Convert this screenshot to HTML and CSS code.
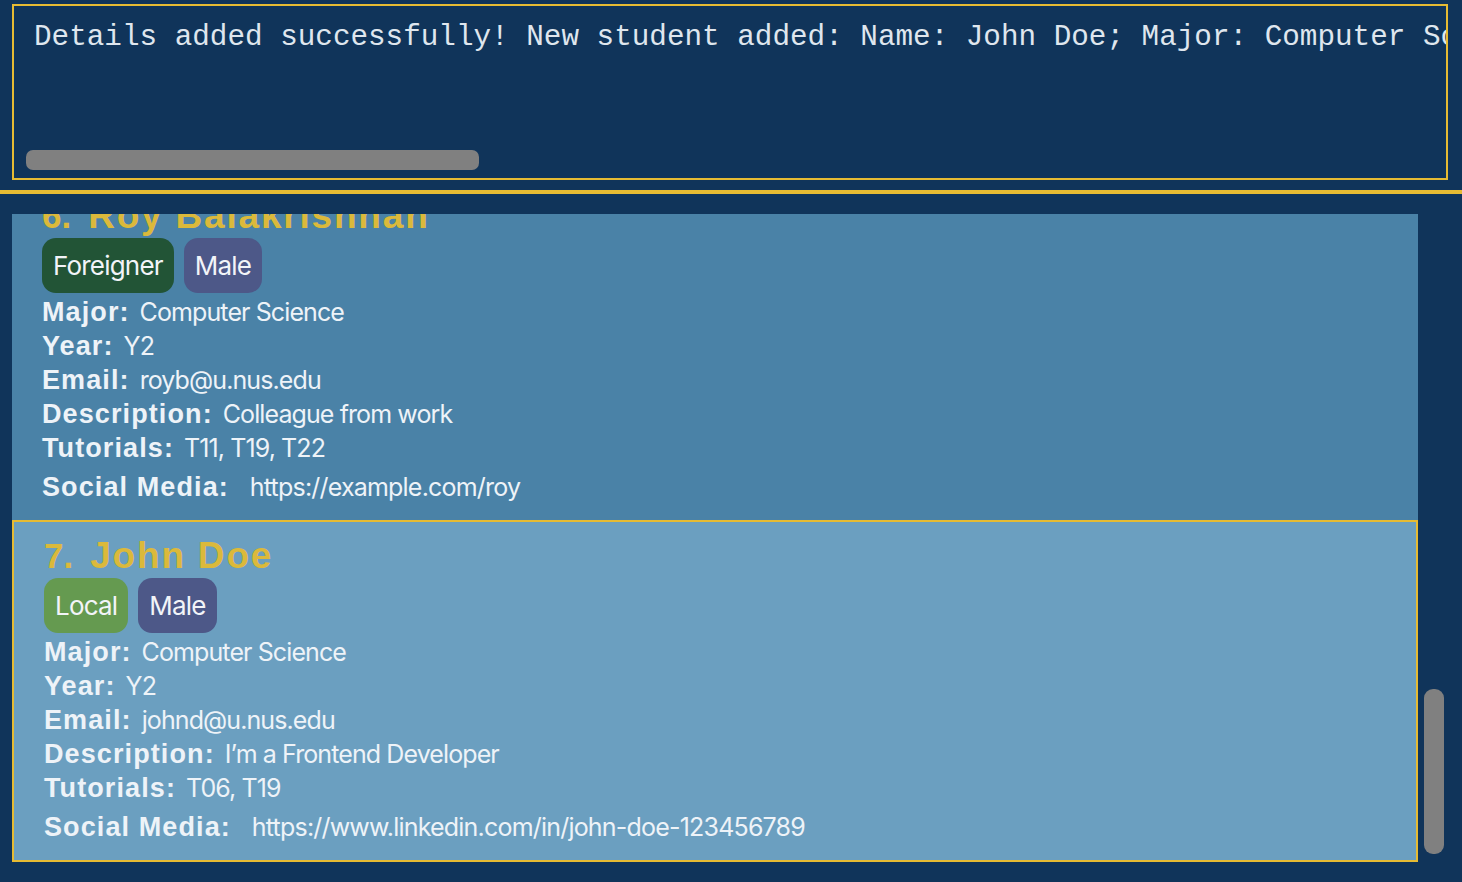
FILE: index.html
```html
<!DOCTYPE html>
<html lang="en">
<head>
<meta charset="utf-8">
<title>Student List</title>
<link rel="stylesheet" href="styles.css">
</head>
<body>
<div class="app">
  <section class="result-pane">
    <div class="result-box">
      <div class="result-text">Details added successfully! New student added: Name: John Doe; Major: Computer Science; Year: Y2; Email: johnd@u.nus.edu; Description: I'm a Frontend Developer; Tutorials: T06, T19</div>
      <div class="hthumb"></div>
    </div>
  </section>
  <div class="divider"></div>
  <section class="list-pane">
    <div class="list-viewport">
      <div class="list-content">
        <div class="card">
          <div class="name-row"><span class="index">6.</span><span class="name">Roy Balakrishnan</span></div>
          <div class="tags"><span class="tag foreigner">Foreigner</span><span class="tag male">Male</span></div>
          <div class="field first"><span class="label">Major:</span><span class="value">Computer Science</span></div>
          <div class="field"><span class="label">Year:</span><span class="value">Y2</span></div>
          <div class="field"><span class="label">Email:</span><span class="value">royb@u.nus.edu</span></div>
          <div class="field"><span class="label">Description:</span><span class="value">Colleague from work</span></div>
          <div class="field"><span class="label">Tutorials:</span><span class="value">T11, T19, T22</span></div>
          <div class="field social"><span class="label">Social Media:</span><span class="value">https://example.com/roy</span></div>
        </div>
        <div class="card selected">
          <div class="name-row"><span class="index">7.</span><span class="name">John Doe</span></div>
          <div class="tags"><span class="tag local">Local</span><span class="tag male">Male</span></div>
          <div class="field first"><span class="label">Major:</span><span class="value">Computer Science</span></div>
          <div class="field"><span class="label">Year:</span><span class="value">Y2</span></div>
          <div class="field"><span class="label">Email:</span><span class="value">johnd@u.nus.edu</span></div>
          <div class="field"><span class="label">Description:</span><span class="value">I’m a Frontend Developer</span></div>
          <div class="field"><span class="label">Tutorials:</span><span class="value">T06, T19</span></div>
          <div class="field social"><span class="label">Social Media:</span><span class="value">https://www.linkedin.com/in/john-doe-123456789</span></div>
        </div>
      </div>
    </div>
    <div class="vscroll"><div class="vthumb"></div></div>
  </section>
</div>
</body>
</html>
```
FILE: styles.css
```css
html, body {
  margin: 0;
  padding: 0;
}

body {
  width: 1462px;
  height: 882px;
  overflow: hidden;
  background: #10345a;
  font-family: "Liberation Sans", Arial, sans-serif;
}

.result-pane {
  padding: 4px 14px 0 12px;
}

.result-box {
  height: 176px;
  box-sizing: border-box;
  border: 2px solid #e6bb33;
  display: flex;
  flex-direction: column;
}

.result-text {
  flex: 1;
  padding: 15px 0 0 20px;
  font-family: "Liberation Mono", "Courier New", monospace;
  font-size: 29.3px;
  line-height: normal;
  color: #dfe6ee;
  white-space: nowrap;
  overflow: hidden;
}

.hthumb {
  width: 453px;
  height: 20px;
  margin: 0 0 8px 12px;
  background: #808080;
  border-radius: 7px;
}

.divider {
  height: 4px;
  margin-top: 10px;
  background: #e6bb33;
}

.list-pane {
  display: flex;
  gap: 6px;
  height: 688px;
  box-sizing: border-box;
  padding: 20px 18px 0 12px;
}

.list-viewport {
  flex: 1;
  overflow: hidden;
}

.list-content {
  margin-top: -34px;
}

.vscroll {
  width: 20px;
}

.vthumb {
  margin-top: 475px;
  height: 165px;
  background: #808080;
  border-radius: 9px;
}

.card {
  height: 340px;
  box-sizing: border-box;
  padding: 14px 30px 13px;
  background: #4a82a7;
  color: #eef3f8;
}

.card.selected {
  height: 342px;
  padding-top: 12px;
  background: #6b9fc0;
  border: 2px solid #e6bb33;
}

.name-row {
  display: flex;
  align-items: baseline;
  height: 44px;
  line-height: 44px;
  font-size: 37px;
  font-weight: bold;
  color: #dbb93b;
  white-space: nowrap;
}

.index {
  margin-right: 17px;
  font-size: 35px;
}

.name {
  letter-spacing: 1.8px;
}

.tags {
  display: flex;
  gap: 10px;
  height: 55px;
}

.tag {
  height: 55px;
  line-height: 55px;
  padding: 0 11px;
  border-radius: 14px;
  font-family: Inter, "Noto Sans", sans-serif;
  font-size: 26px;
  letter-spacing: -0.8px;
  color: #f2f4f8;
}

.tag.foreigner {
  background: #225436;
}

.tag.local {
  background: #659a50;
}

.tag.male {
  background: #4d5888;
}

.field {
  line-height: 34px;
  font-size: 27px;
  white-space: nowrap;
}

.field.first {
  margin-top: 2px;
}

.label {
  font-weight: bold;
  letter-spacing: 1.1px;
  margin-right: 10px;
}

.value {
  font-family: Inter, "Noto Sans", sans-serif;
  font-size: 25px;
  letter-spacing: -0.9px;
}

.field.social {
  line-height: 40px;
  margin-top: 2px;
}

.field.social .label {
  margin-right: 21px;
}

.field.social .value {
  font-size: 25px;
  letter-spacing: -0.8px;
}
```
